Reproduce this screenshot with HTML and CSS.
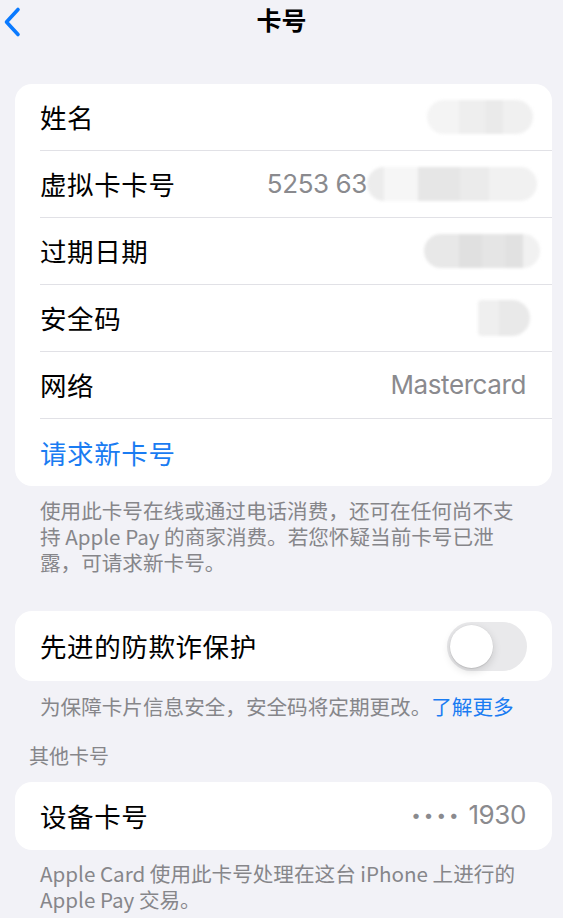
FILE: index.html
```html
<!DOCTYPE html>
<html lang="zh-CN">
<head>
<meta charset="utf-8">
<title>卡号</title>
<link rel="stylesheet" href="styles.css">
</head>
<body>
<header class="nav">
  <a class="back" aria-label="返回">
    <svg width="20" height="32" viewBox="0 0 20 32"><path d="M16 3.5 L4.5 16 L16 28.5" fill="none" stroke="#0a7aff" stroke-width="3.6" stroke-linecap="round" stroke-linejoin="round"/></svg>
  </a>
  <h1 class="title">卡号</h1>
  <span></span>
</header>

<section class="card card-first">
  <div class="row"><span class="label">姓名</span><span class="blur blur-name"></span></div>
  <div class="row"><span class="label">虚拟卡卡号</span><span class="value-group"><span class="value">5253 63</span><span class="blur blur-num"></span></span></div>
  <div class="row"><span class="label">过期日期</span><span class="blur blur-exp"></span></div>
  <div class="row"><span class="label">安全码</span><span class="blur blur-cvv"></span></div>
  <div class="row"><span class="label">网络</span><span class="value">Mastercard</span></div>
  <div class="row row-last"><span class="label link">请求新卡号</span></div>
</section>
<p class="footer footer-1">使用此卡号在线或通过电话消费，还可在任何尚不支持 Apple Pay 的商家消费。若您怀疑当前卡号已泄露，可请求新卡号。</p>

<section class="card card-toggle">
  <div class="row row-toggle"><span class="label">先进的防欺诈保护</span><span class="switch"><span class="knob"></span></span></div>
</section>
<p class="footer footer-2">为保障卡片信息安全，安全码将定期更改。<span class="link">了解更多</span></p>

<h2 class="section-header">其他卡号</h2>
<section class="card card-device">
  <div class="row row-device"><span class="label">设备卡号</span><span class="value"><span class="dots">••••</span> 1930</span></div>
</section>
<p class="footer footer-3">Apple Card 使用此卡号处理在这台 iPhone 上进行的 Apple Pay 交易。</p>
</body>
</html>
```

FILE: styles.css
```css
* { box-sizing: border-box; }
html, body {
  margin: 0;
  padding: 0;
}
body {
  background: #f2f2f7;
  width: 563px;
  min-height: 918px;
  font-family: "Inter", "Noto Sans CJK SC", sans-serif;
  color: #000;
  -webkit-font-smoothing: antialiased;
}
.nav {
  height: 46px;
  display: grid;
  grid-template-columns: 60px 1fr 60px;
  align-items: start;
}
.back {
  display: flex;
  align-items: center;
  padding-left: 2px;
  height: 44px;
}
.back svg { display: block; }
.title {
  margin: 0;
  text-align: center;
  font-size: 25px;
  font-weight: 700;
  line-height: 38px;
  font-family: "Noto Sans CJK SC", sans-serif;
}
.card {
  background: #fff;
  border-radius: 17px;
  margin: 0 11px 0 15px;
  overflow: hidden;
}
.card-first { margin-top: 38px; }
.row {
  margin-left: 25px;
  padding-right: 26px;
  height: 66px;
  display: flex;
  align-items: center;
  justify-content: space-between;
}
.row + .row {
  border-top: 1px solid #e1e1e6;
  height: 67px;
}
.row.row-last { height: 68px; }
.label {
  font-family: "Noto Sans CJK SC", sans-serif;
  font-size: 26.5px;
  line-height: 32px;
  letter-spacing: 0.6px;
}
.value {
  font-size: 26px;
  color: #8a8a8e;
  letter-spacing: -0.4px;
  line-height: 32px;
}
.link { color: #1a7cf2; }
.value-group {
  display: flex;
  align-items: center;
}
.blur {
  display: block;
  height: 34px;
  border-radius: 17px;
  filter: blur(1.5px);
}
.blur-name {
  width: 106px;
  margin-right: -7px;
  background:
    linear-gradient(90deg, #f4f4f4 0 30%, #eeeeee 30% 55%, #eaeaea 55% 72%, #f0f0f0 72% 100%);
}
.blur-num {
  width: 170px;
  margin-right: -11px;
  background:
    linear-gradient(90deg, #ececec 0 10%, #f6f6f6 10% 30%, #e6e6e6 30% 55%, #ebebeb 55% 72%, #f1f1f1 72% 100%);
}
.blur-exp {
  width: 116px;
  margin-right: -14px;
  background:
    linear-gradient(90deg, #e8e8e8 0 30%, #e0e0e0 30% 50%, #e5e5e5 50% 70%, #e1e1e1 70% 85%, #f1f1f1 85% 100%);
}
.blur-cvv {
  width: 52px;
  height: 36px;
  margin-right: -4px;
  border-radius: 4px 18px 18px 4px;
  background: linear-gradient(90deg, #efefef 0 40%, #e9e9e9 40% 100%);
}
.footer {
  margin: 0;
  padding: 11px 37px 0 40px;
  font-family: "Noto Sans CJK SC", sans-serif;
  font-size: 20.6px;
  line-height: 26px;
  color: #86868a;
}
.footer-1 { margin-bottom: 36px; }
.card-toggle .row { height: 70px; }
.row-toggle { padding-right: 25px; }
.switch {
  display: block;
  width: 80px;
  height: 49px;
  border-radius: 25px;
  background: #e9e9eb;
  padding: 3px;
}
.knob {
  display: block;
  width: 43px;
  height: 43px;
  border-radius: 50%;
  background: #fff;
  box-shadow: 0 3px 8px rgba(0,0,0,0.15), 0 1px 1px rgba(0,0,0,0.08), 0 0 0 0.5px rgba(0,0,0,0.04);
}
.footer-2 { padding-top: 12px; }
.section-header {
  margin: 24px 0 13px 29px;
  font-family: "Noto Sans CJK SC", sans-serif;
  font-weight: 400;
  font-size: 20px;
  line-height: 26px;
  color: #86868a;
}
.card-device .row { height: 68px; }
.dots {
  letter-spacing: 3px;
  font-size: 17px;
  position: relative;
  top: -3px;
}
.footer-3 { padding-top: 10px; }
```
